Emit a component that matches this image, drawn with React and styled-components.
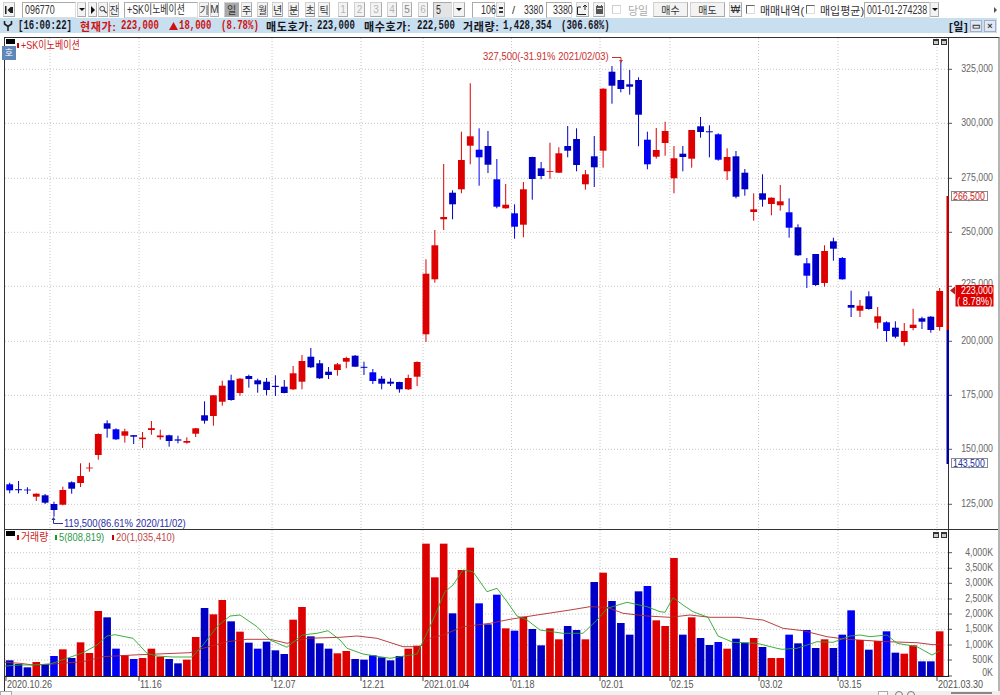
import React from "react"
import styled, { createGlobalStyle } from "styled-components"

const SANS = `"Liberation Sans", "Noto Sans CJK KR", sans-serif`
const MONO = `"Liberation Mono", "Noto Sans CJK KR", monospace`

// [high, bodyTop, bodyBottom, low, colour] in page pixels, one per session
const CANDLES = [
  [482.7, 484.3, 490.3, 493.3, "B"], [481, 489.2, 490.2, 493.3, "b"], [487.3, 489.6, 490.4, 494, "b"], [493.3, 493.7, 496.7, 501, "r"],
  [494, 495.3, 502.7, 504, "b"], [501.7, 504, 510, 516.7, "b"], [486.7, 490, 504.7, 505.3, "r"], [481.3, 482.3, 488.7, 493.7, "b"],
  [463.3, 476, 483, 487, "r"], [462.7, 467.6, 468.4, 471.7, "r"], [433.3, 434, 455, 459.7, "r"], [420.3, 423.3, 428.7, 437.7, "b"],
  [428.3, 429.3, 439.3, 440, "B"], [428.7, 431.3, 435.7, 442.7, "r"], [435, 435.2, 436.7, 444, "b"], [432, 437.6, 439.2, 448, "r"],
  [421, 428.2, 430, 434.7, "r"], [429.7, 435.5, 437.2, 439.7, "r"], [434.7, 435.3, 441, 446.7, "b"], [435.7, 439.4, 440.6, 443.3, "b"],
  [437.3, 441, 442.7, 443.7, "r"], [428, 428.3, 433.7, 437, "r"], [401.3, 415.3, 420.7, 423.7, "b"], [395, 395.3, 416, 425.7, "r"],
  [380.7, 385.7, 401.7, 405.7, "r"], [374.7, 380.3, 400, 400.7, "b"], [378, 378.7, 393, 395.7, "r"], [374.7, 376, 379, 387.7, "b"],
  [378.7, 380.3, 384.3, 392.7, "b"], [378, 381.7, 390, 395.3, "b"], [375.3, 385.8, 387, 396, "b"], [380, 386.7, 393, 393.3, "b"],
  [366, 373.3, 389.3, 390, "r"], [355, 361, 381.7, 389.3, "r"], [348, 356.7, 367.3, 368, "b"], [360, 363.3, 378.3, 379, "b"],
  [367, 371.7, 375, 379, "b"], [363, 364.3, 370, 375.7, "r"], [356.7, 358, 361.7, 368.3, "r"], [355, 355.7, 366.7, 367, "b"],
  [361.7, 366.8, 367.8, 375, "b"], [369, 372.3, 381, 384, "B"], [376, 378.7, 383.7, 389.3, "b"], [378.3, 381.7, 383.7, 386, "b"],
  [381.7, 382, 389.3, 392.7, "b"], [374.7, 378, 389.3, 390, "r"], [361.3, 362, 376.7, 386, "r"], [259.3, 273.7, 334.3, 342, "r"],
  [230, 245.3, 279.3, 282.7, "r"], [164, 217, 219.3, 230, "r"], [190.3, 192.7, 204.3, 219.3, "b"], [131.7, 160, 189.3, 193.3, "r"],
  [83.3, 136.3, 145.7, 164.3, "r"], [128.3, 149.7, 157.3, 185.7, "B"], [131, 146, 164.7, 173, "b"], [159, 179.3, 206.7, 208.3, "B"],
  [184, 204.7, 208.3, 208.7, "r"], [204.3, 213.3, 226.7, 238.7, "B"], [182, 189.3, 224.7, 237.3, "r"], [156.7, 157, 179, 199.7, "b"],
  [162, 168.3, 176, 179.3, "b"], [142.7, 171, 171.8, 178.7, "r"], [147.3, 153.3, 172.7, 173, "r"], [126, 146, 150.7, 157.3, "b"],
  [128.3, 139, 165, 171.3, "b"], [170, 174.3, 184.3, 189.7, "r"], [136, 156.3, 167.3, 187, "b"], [88.3, 88.7, 150.7, 167.7, "r"],
  [66, 71.7, 85.7, 103.7, "b"], [62, 80, 89, 92.3, "b"], [70, 84.3, 86.7, 94.7, "b"], [77.3, 80, 114.7, 146.3, "b"],
  [131.7, 139.7, 164.3, 169.3, "B"], [128, 150, 156.7, 158.7, "r"], [121.7, 131, 143, 155.7, "r"], [146, 158.3, 178.3, 193.3, "r"],
  [146, 153.7, 157, 171.3, "b"], [130, 130, 158.7, 167.7, "r"], [117, 126.3, 132, 137.7, "b"], [125.3, 131.3, 132.3, 157.3, "b"],
  [133.3, 134.3, 159.7, 160.7, "B"], [148.3, 157, 171.3, 180, "r"], [151, 156.3, 196.7, 198.3, "b"], [169, 172.7, 189.3, 195.7, "b"],
  [193.3, 209.3, 212, 220.7, "r"], [174.3, 193.3, 199.7, 206.7, "b"], [197.3, 197.7, 204, 215.3, "r"], [185, 201.3, 205.3, 210.7, "r"],
  [198.3, 212.3, 227.7, 237.7, "B"], [224.3, 227.3, 255.3, 256, "b"], [258, 263.3, 275.7, 288, "B"], [254, 254, 285, 286, "b"],
  [245.3, 251, 283, 286.7, "r"], [237.7, 241.3, 248.7, 260.7, "b"], [257, 258, 279.3, 279.7, "B"], [290.7, 305, 307.7, 317, "b"],
  [300, 305.7, 310.7, 317, "r"], [291.3, 296.3, 309, 309.7, "b"], [307, 316.3, 322.7, 328.7, "r"], [321.3, 322.3, 331, 341.7, "B"],
  [321.3, 327.7, 336.7, 338.3, "b"], [323, 331, 342, 345.7, "r"], [308.7, 324.7, 328, 330.3, "r"], [316.7, 318.3, 321.7, 329, "b"],
  [316, 316.7, 330, 332.7, "b"], [288, 291, 327, 330.7, "r"],
]

// volume bars: [top, colour]; tops are thirds of a pixel below y=530
const VOLUMES = [
  [391, "b"], [402, "b"], [412, "b"], [396, "r"], [402, "b"], [378, "B"], [358, "r"], [384, "b"], [337, "r"], [369, "r"], [243, "r"],
  [262, "b"], [356, "B"], [376, "r"], [387, "B"], [384, "r"], [356, "r"], [380, "r"], [387, "b"], [400, "b"], [389, "r"], [321, "r"],
  [234, "b"], [253, "r"], [210, "r"], [274, "b"], [305, "r"], [338, "b"], [356, "B"], [335, "b"], [361, "b"], [372, "b"], [269, "r"],
  [231, "r"], [319, "b"], [340, "b"], [356, "b"], [370, "r"], [363, "r"], [387, "b"], [389, "b"], [376, "B"], [382, "b"], [391, "b"],
  [378, "b"], [356, "r"], [347, "r"], [41, "r"], [142, "r"], [41, "r"], [250, "b"], [120, "r"], [53, "r"], [220, "B"], [283, "b"],
  [194, "B"], [295, "r"], [302, "B"], [260, "r"], [297, "b"], [346, "b"], [295, "r"], [328, "r"], [288, "b"], [300, "b"], [328, "r"],
  [156, "b"], [128, "r"], [213, "b"], [279, "b"], [314, "b"], [184, "b"], [168, "B"], [271, "r"], [288, "r"], [84, "r"], [314, "b"],
  [262, "r"], [324, "b"], [345, "b"], [336, "B"], [356, "r"], [326, "b"], [338, "b"], [324, "r"], [351, "b"], [384, "r"], [384, "r"],
  [314, "B"], [340, "b"], [300, "B"], [354, "b"], [328, "r"], [354, "b"], [314, "B"], [241, "B"], [330, "r"], [359, "b"], [333, "r"],
  [304, "B"], [368, "b"], [371, "r"], [346, "r"], [394, "b"], [394, "b"], [304, "r"],
]

const MA5 = [
  [5, 666], [20, 665], [33, 665], [50, 664], [67, 658.3], [83, 652.7], [97, 645], [107, 636], [115, 634.7], [133, 638.3], [147, 653.3],
  [157, 656], [173, 657], [192, 657], [203, 645], [217, 626.7], [230, 616], [240, 615], [257, 626.7], [270, 640], [287, 647.3], [302, 635],
  [317, 633.3], [328, 630.7], [340, 640], [347, 648.3], [363, 654], [390, 658.3], [417, 654], [430, 626.7], [445, 591.7], [453, 585],
  [463, 570], [473, 571.7], [487, 591.7], [497, 588.3], [507, 601.7], [517, 616], [527, 620], [540, 630], [563, 633.3], [583, 633.3],
  [597, 620], [607, 608.3], [627, 602.3], [647, 606.7], [660, 611.7], [665, 612.3], [673, 597.7], [683, 605], [693, 611.7], [708, 617.3],
  [718, 636], [733, 642.3], [757, 643.3], [777, 648.3], [782, 649.3], [797, 648.3], [817, 641.7], [833, 642.3], [850, 636], [860, 635],
  [870, 636.7], [887, 635], [897, 643.3], [917, 646.7], [932, 655], [940, 650.7],
]
const MA20 = [
  [5, 662.3], [20, 663.3], [33, 665], [53, 664], [83, 661.7], [103, 656.7], [133, 655], [157, 654], [190, 652.7], [203, 648.3], [227, 641.7],
  [247, 639.3], [270, 639.3], [287, 643.3], [307, 638.3], [340, 637.3], [357, 636], [377, 638.3], [403, 646.7], [420, 646.7], [430, 638.3],
  [443, 635], [463, 626.7], [490, 623.3], [510, 619.3], [537, 615], [570, 610], [590, 606.7], [607, 607.3], [623, 613.3], [647, 616],
  [670, 617.3], [690, 615], [710, 617.3], [737, 617.3], [763, 620], [783, 628.3], [803, 630.7], [827, 636.7], [847, 639.3], [887, 641.7],
  [917, 642.7], [933, 644.7], [941, 644.3],
]

const GRID_X = [50, 139, 272, 361, 423, 511.5, 600, 670, 758.5, 838, 937]
const PRICES = [
  ["325,000", 69.3], ["300,000", 123.3], ["275,000", 178.3], ["250,000", 232.3], ["225,000", 286.3],
  ["200,000", 341.3], ["175,000", 395.3], ["150,000", 449.3], ["125,000", 504.3],
]
const VOL_TICKS = [
  ["4,000K", 552.7], ["3,500K", 568.3], ["3,000K", 583.3], ["2,500K", 599], ["2,000K", 614],
  ["1,500K", 629.3], ["1,000K", 645], ["500K", 660], ["0K", 676],
]
const DATES = [
  [6, "2020.10.26"], [139, "11.16"], [272, "12.07"], [361, "12.21"], [423, "2021.01.04"], [511, "01.18"],
  [600, "02.01"], [670, "02.15"], [759, "03.02"], [838, "03.15"], [937, "2021.03.30"],
]
const COLORS = { r: "#dc0000", b: "#0000c4", B: "#0000f4" }
const colX = i => 9.7 + 8.857 * i
const pts = list => list.map(p => p.join(",")).join(" ")
// the original bitmap font is much narrower than anything installed
const squeeze = (x, y, s = 0.8) => `translate(${x} ${y}) scale(${s} 1)`

function App() {
  return (
    <Page>
      <GlobalStyle />
      <Toolbar>
        <Btn $ml={3} $w={12}>
          <svg width="10" height="10" viewBox="0 0 10 10"><path d="M1 1h1.500v8H1zM9 2v6H6.500L3.500 5l3-3z" fill="#222" /></svg>
        </Btn>
        <Field $ml={7} $w={54}><Fit>096770</Fit></Field>
        <Arrow $ml={1} $w={9} />
        <Btn $ml={2} $w={9}>
          <svg width="5" height="8" viewBox="0 0 5 8"><path d="M1 0l4 4-4 4z" fill="#111" /></svg>
        </Btn>
        <Btn $ml={1} $w={10}>
          <svg width="9" height="9" viewBox="0 0 9 9"><circle cx="3.600" cy="3.600" r="2.600" fill="none" stroke="#333" /><path d="M5.500 5.500L8.500 8.500" stroke="#333" strokeWidth="1.500" /></svg>
        </Btn>
        <Btn $ml={1} $w={10}>잔</Btn>
        <Field $ml={5} $w={74}><Fit>+SK이노베이션</Fit></Field>
        <Btn $ml={1} $w={10}>기</Btn>
        <Btn $ml={1} $w={9}>M</Btn>
        <Btn $ml={5} $w={15} $active>일</Btn>
        <Btn $ml={2} $w={11}>주</Btn>
        <Btn $ml={5} $w={11}>월</Btn>
        <Btn $ml={4} $w={11}>년</Btn>
        <Btn $ml={5} $w={11}>분</Btn>
        <Btn $ml={6} $w={10}>초</Btn>
        <Btn $ml={3} $w={12}>틱</Btn>
        <Btn $ml={8} $w={10} $dim>1</Btn>
        <Btn $ml={6} $w={11} $dim>2</Btn>
        <Btn $ml={5} $w={12} $dim>3</Btn>
        <Btn $ml={5} $w={10} $dim>4</Btn>
        <Btn $ml={5} $w={10} $soft>5</Btn>
        <Btn $ml={6} $w={10} $dim>6</Btn>
        <Field $ml={5} $w={19} $grey><Fit>5</Fit></Field>
        <Arrow $ml={1} $w={12} />
        <Field $ml={7} $w={23}><Fit $pad={6}>106</Fit></Field>
        <Spin $ml={1} $w={9}><i /><i /></Spin>
        <Plain $ml={7} $w={5}>/</Plain>
        <Plain $ml={7} $w={19} $s={0.72}>3380</Plain>
        <Field $ml={3} $w={26}><Fit $pad={4}>3380</Fit></Field>
        <Btn $ml={4} $w={13}>
          <svg width="11" height="11" viewBox="0 0 11 11"><path d="M.5 3v7.500H9M.5 3H4M8 1v5M6 3l2-2 2 2" fill="none" stroke="#222" /></svg>
        </Btn>
        <Btn $ml={4} $w={12}>
          <svg width="9" height="9" viewBox="0 0 9 9"><path d="M1 1h1V0h1v1h3V0h1v1h1v8H1z" fill="#555" /><path d="M2 3h5v1H2z" fill="#ddd" /></svg>
        </Btn>
        <Check $ml={7} $dim />
        <Plain $ml={7} $w={16} $dim>당일</Plain>
        <Btn $ml={9} $w={35}>매수</Btn>
        <Btn $ml={2} $w={35}>매도</Btn>
        <Btn $ml={4} $w={13}>₩</Btn>
        <Check $ml={4} />
        <Plain $ml={5} $w={43}>매매내역(</Plain>
        <Check $ml={3} />
        <Plain $ml={5} $w={40}>매입평균)</Plain>
        <Field $ml={4} $w={66}><Fit>001-01-274238</Fit></Field>
        <Arrow $w={9} />
        <Caret $ml={55} />
      </Toolbar>

      <StatusBar>
        <StatusIcon viewBox="0 0 10 10">
          <path d="M1.500 0v3l3.500 2.500L8.500 3V0M5 5v5" fill="none" stroke="#222" strokeWidth="1.600" />
        </StatusIcon>
        <Stat $ml={5} $w={53}>[16:00:22]</Stat>
        <KrStat $ml={9} $w={36} $red>현재가:</KrStat>
        <Stat $ml={5} $w={39} $red>223,000</Stat>
        <UpMark viewBox="0 0 9 8"><path d="M4.500 0L9 8H0z" fill="#d01010" /></UpMark>
        <Stat $ml={1} $w={28} $red>18,000</Stat>
        <Stat $ml={14} $w={36} $red>(8.78%)</Stat>
        <KrStat $ml={9} $w={51}>매도호가:</KrStat>
        <Stat $w={39}>223,000</Stat>
        <KrStat $ml={8} $w={52}>매수호가:</KrStat>
        <Stat $ml={1} $w={37}>222,500</Stat>
        <KrStat $ml={9} $w={34}>거래량:</KrStat>
        <Stat $ml={6} $w={49}>1,428,354</Stat>
        <Stat $ml={9} $w={49}>(306.68%)</Stat>
        <KrStat $ml={339} $w={14}>[일]</KrStat>
        <BarBtn $ml={7}>▭</BarBtn>
        <BarBtn $ml={2}>×</BarBtn>
      </StatusBar>

      <ChartFrame>
        <PricePane>
          <Legend>
            <BlackTab />
            <Marker $color="#cc0000" />
            <LegendText $color="#cc2222" $w={62} $s={0.82}>+SK이노베이션</LegendText>
          </Legend>
          <SideTab>호</SideTab>
          <PaneButtons><MiniBtn /><MiniBtn /></PaneButtons>
          <PaneSvg width="992" height="491" viewBox="5 38 992 491">
            {GRID_X.map(x => <GridLine key={x} x1={x} x2={x} y1="38" y2="529" />)}
            {PRICES.map(([label, y]) => (
              <g key={label}>
                <GridLine x1="5" x2="948" y1={y} y2={y} />
                <line x1="948" x2="952" y1={y} y2={y} stroke="#555" />
                <AxisText transform={squeeze(993, label === "225,000" ? 287 : y + 3)}>{label}</AxisText>
              </g>
            ))}
            <line x1="948.500" x2="948.500" y1="38" y2="529" stroke="#333" />
            {CANDLES.map(([hi, top, bot, low, c], i) => (
              <g key={i}>
                <line x1={colX(i)} x2={colX(i)} y1={hi} y2={low} stroke={COLORS[c]} />
                <rect x={colX(i) - 3.400} y={top} width="6.800" height={bot - top} fill={COLORS[c]} />
              </g>
            ))}
            <Note transform={squeeze(483, 60, 0.86)} fill="#c83030">327,500(-31.91% 2021/02/03)</Note>
            <path d="M612 57.500h9v4" fill="none" stroke="#c83030" />
            <path d="M619 60l2 3 2-3z" fill="#c83030" />
            <Note transform={squeeze(64, 527, 0.865)} fill="#2a2fa8">119,500(86.61% 2020/11/02)</Note>
            <path d="M53.500 520v3.500H63" fill="none" stroke="#2a2fa8" />
            <path d="M51.500 520l2-3 2 3z" fill="#2a2fa8" />
            <rect x="946.500" y="196" width="2.500" height="134" fill="#c00000" />
            <rect x="946.500" y="330" width="2.500" height="134" fill="#0000a0" />
            <rect x="951.500" y="191.500" width="36" height="9" fill="#fff" stroke="#8a8a8a" />
            <Note transform={squeeze(953, 199.500)} fill="#cc2222">266,500</Note>
            <rect x="951.500" y="458.500" width="36" height="9" fill="#fff" stroke="#8a8a8a" />
            <Note transform={squeeze(953, 466.500)} fill="#2230a8">143,500</Note>
            <rect x="955.500" y="285" width="38" height="21.500" fill="#dc0000" />
            <path d="M950 290.500l5-4v8z" fill="#b02020" />
            <Note transform={squeeze(961, 294)} fill="#fff">223,000</Note>
            <Note transform={squeeze(957, 304.500, 0.85)} fill="#fff">( 8.78%)</Note>
          </PaneSvg>
        </PricePane>
        <VolumePane>
          <Legend>
            <BlackTab />
            <Marker $color="#cc0000" />
            <LegendText $color="#cc2222" $w={29} $s={0.9}>거래량</LegendText>
            <Marker $color="#10a030" $ml={5} />
            <LegendText $color="#2a9a4a" $w={47} $s={0.85}>5(808,819)</LegendText>
            <Marker $color="#cc0000" $ml={6} />
            <LegendText $color="#c04848" $w={61} $s={0.86}>20(1,035,410)</LegendText>
          </Legend>
          <PaneButtons $top={2}><MiniBtn /><MiniBtn /></PaneButtons>
          <PaneSvg width="992" height="147" viewBox="5 530 992 147">
            {GRID_X.map(x => <GridLine key={x} x1={x} x2={x} y1="530" y2="676" />)}
            {VOL_TICKS.map(([label, y]) => (
              <g key={label}>
                <GridLine x1="5" x2="948" y1={y} y2={y} />
                <line x1="948" x2="952" y1={y} y2={y} stroke="#555" />
                <AxisText transform={squeeze(993, label === "0K" ? 675.500 : y + 3)}>{label}</AxisText>
              </g>
            ))}
            {VOLUMES.map(([t, c], i) => (
              <rect key={i} x={colX(i) - 3.800} y={530 + t / 3} width="7.600" height={146 - t / 3} fill={COLORS[c]} />
            ))}
            <polyline points={pts(MA20)} fill="none" stroke="#b02a2a" strokeWidth=".9" />
            <polyline points={pts(MA5)} fill="none" stroke="#2aa52a" strokeWidth=".9" />
            <path d="M5 676.500h944M948.500 530v147" fill="none" stroke="#222" />
          </PaneSvg>
        </VolumePane>
        <PaneSvg width="992" height="14" viewBox="5 677 992 14">
          {DATES.map(([x, label]) => (
            <g key={label}>
              <line x1={x} x2={x} y1="677" y2="681" stroke="#444" />
              <DateText transform={squeeze(x + 1, 688, 0.82)}>{label}</DateText>
            </g>
          ))}
        </PaneSvg>
      </ChartFrame>
      <Footer>
        <FootBox $ml={0} $w={12} />
        <FootBox $ml={866} $w={10} />
        <FootDot $ml={7} />
        <FootDot $ml={4} />
        <FootBar $ml={36} $w={41} />
      </Footer>
    </Page>
  )
}

export default App

const GlobalStyle = createGlobalStyle`
html, body {
  margin: 0;
  background: #fff;
}
`

const Page = styled.div`
width: 1000px;
height: 695px;
overflow: hidden;
font-family: ${SANS};
font-size: 11px;
color: #222;
`

const Toolbar = styled.div`
display: flex;
align-items: center;
height: 18px;
box-sizing: border-box;
padding-top: 1px;
`

const Btn = styled.div`
display: flex;
align-items: center;
justify-content: center;
flex: none;
box-sizing: border-box;
height: 15px;
margin-left: ${p => p.$ml || 0}px;
width: ${p => p.$w}px;
background: ${p => (p.$active ? "#a9a9a9" : "#f3f3f3")};
border: 1px solid #d0d0d0;
border-right-color: #aaa;
border-bottom-color: #aaa;
color: ${p => (p.$soft ? "#888" : p.$dim ? "#b5b5b5" : "#333")};
font-size: 10px;
`

const Field = styled.div`
flex: none;
box-sizing: border-box;
height: 16px;
margin-left: ${p => p.$ml || 0}px;
width: ${p => p.$w}px;
padding-left: 2px;
background: ${p => (p.$grey ? "#e4e4e4" : "#fff")};
border: 1px solid #aaa;
border-right-color: #ddd;
border-bottom-color: #ddd;
color: #333;
font-size: 12px;
line-height: 14px;
white-space: nowrap;
`

const Fit = styled.span`
display: inline-block;
margin-left: ${p => p.$pad || 0}px;
transform: scaleX(.74);
transform-origin: left center;
`

const Arrow = styled(Btn)`
&::after {
  content: "";
  border-left: 3px solid transparent;
  border-right: 3px solid transparent;
  border-top: 3px solid #111;
}
`

const Spin = styled(Btn)`
flex-direction: column;
gap: 2px;
> i {
  width: 4px;
  height: 2px;
  background: #333;
}
`

const Plain = styled.div`
flex: none;
margin-left: ${p => p.$ml || 0}px;
width: ${p => p.$w}px;
color: ${p => (p.$dim ? "#aaa" : "#333")};
font-size: ${p => (p.$s ? 12 : 11)}px;
white-space: nowrap;
transform: scaleX(${p => p.$s || 1});
transform-origin: left center;
`

const Check = styled.div`
flex: none;
box-sizing: border-box;
width: 9px;
height: 9px;
margin-left: ${p => p.$ml || 0}px;
background: #fff;
border: 1px solid ${p => (p.$dim ? "#ccc" : "#666")};
border-right-color: #ddd;
border-bottom-color: #ddd;
`

const Caret = styled.div`
flex: none;
margin-left: ${p => p.$ml}px;
border-top: 3px solid transparent;
border-bottom: 3px solid transparent;
border-left: 3px solid #555;
`

const StatusBar = styled.div`
display: flex;
align-items: center;
width: 997px;
height: 15px;
box-sizing: border-box;
padding-left: 3px;
background: #c8dff0;
font-weight: bold;
`

const StatusIcon = styled.svg`
flex: none;
width: 10px;
height: 10px;
`

const UpMark = styled.svg`
flex: none;
width: 9px;
height: 8px;
margin-left: 9px;
`

const Stat = styled.span`
flex: none;
margin-left: ${p => p.$ml || 0}px;
width: ${p => p.$w}px;
color: ${p => (p.$red ? "#d01010" : "#16161e")};
font-family: ${MONO};
font-size: 12px;
white-space: nowrap;
transform: scaleX(.75);
transform-origin: left center;
`

const KrStat = styled.span`
flex: none;
margin-left: ${p => p.$ml || 0}px;
width: ${p => p.$w}px;
color: ${p => (p.$red ? "#d01010" : "#16161e")};
font-size: 11px;
letter-spacing: .6px;
white-space: nowrap;
`

const BarBtn = styled.div`
flex: none;
box-sizing: border-box;
width: 12px;
height: 12px;
margin-left: ${p => p.$ml}px;
background: #dfeaf3;
border: 1px solid #aac;
color: #333;
font-size: 9px;
line-height: 10px;
text-align: center;
`

const ChartFrame = styled.div`
width: 993px;
margin: 4px 0 0 4px;
border-left: 1px solid #333;
border-top: 1px solid #333;
border-right: 2px solid #b5b5b5;
background: #fff;
`

const PricePane = styled.div`
position: relative;
height: 491px;
`

const VolumePane = styled.div`
position: relative;
height: 147px;
border-top: 1px solid #333;
`

const PaneSvg = styled.svg`
display: block;
`

const Legend = styled.div`
position: absolute;
top: 1px;
left: 1px;
display: flex;
align-items: flex-start;
`

const BlackTab = styled.div`
flex: none;
width: 9px;
height: 5px;
background: #000;
`

const Marker = styled.div`
flex: none;
width: 2px;
height: 5px;
margin: 4px 2px 0 ${p => p.$ml || 2}px;
background: ${p => p.$color};
`

const LegendText = styled.span`
flex: none;
width: ${p => p.$w}px;
color: ${p => p.$color};
font-size: 11px;
line-height: 13px;
white-space: nowrap;
transform: scaleX(${p => p.$s});
transform-origin: left center;
`

const SideTab = styled.div`
position: absolute;
left: -3px;
top: 8px;
width: 14px;
height: 14px;
background: #5f88b8;
color: #fff;
font-size: 9px;
line-height: 14px;
text-align: center;
`

const PaneButtons = styled.div`
position: absolute;
top: ${p => p.$top || 1}px;
left: 928px;
display: flex;
gap: 2px;
`

const MiniBtn = styled.div`
width: 6px;
height: 6px;
box-sizing: border-box;
border: 1px solid #333;
border-top-width: 2px;
background: #ccc;
`

const GridLine = styled.line`
stroke: #c6c6c6;
stroke-dasharray: 1 2;
`

const AxisText = styled.text`
font-family: ${SANS};
font-size: 11px;
fill: #666;
text-anchor: end;
`

const DateText = styled.text`
font-family: ${SANS};
font-size: 11px;
fill: #555;
`

const Note = styled.text`
font-family: ${SANS};
font-size: 11px;
`

const Footer = styled.div`
display: flex;
align-items: flex-start;
height: 4px;
background: #f0f0f0;
overflow: hidden;
`

const FootBox = styled.div`
flex: none;
box-sizing: border-box;
width: ${p => p.$w}px;
height: 10px;
margin-left: ${p => p.$ml}px;
border: 1px solid #aaa;
background: #fafafa;
`

const FootDot = styled.div`
flex: none;
box-sizing: border-box;
width: 8px;
height: 8px;
margin-left: ${p => p.$ml}px;
border: 1px solid #777;
border-radius: 50%;
`

const FootBar = styled.div`
flex: none;
width: ${p => p.$w}px;
height: 2px;
margin: 1px 0 0 ${p => p.$ml}px;
background: #888;
`
